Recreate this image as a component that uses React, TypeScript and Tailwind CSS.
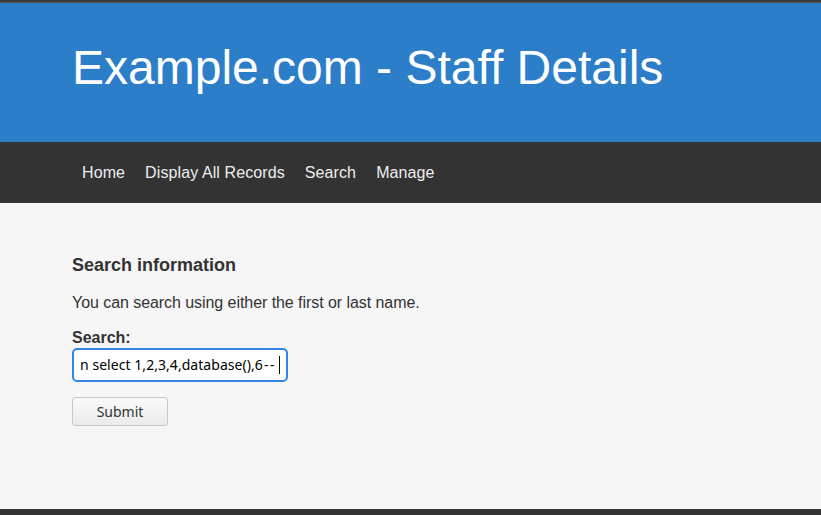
export default function App() {
  return (
    <div className="min-h-[515px] flex flex-col bg-[#f6f6f6] font-['Liberation_Sans',Arial,sans-serif] text-[#333]">
      {/* top strip */}
      <div className="h-[3px] bg-[#3b3b3b] border-b border-[#555]" />

      {/* header */}
      <header className="h-[139px] bg-[#2b7ec7] pt-[37px] px-[72px]">
        <h1 className="text-[48px] leading-[55px] text-white font-normal">Example.com - Staff Details</h1>
      </header>

      {/* nav */}
      <nav className="h-[61px] bg-[#333333] flex items-center px-[72px]">
        {['Home', 'Display All Records', 'Search', 'Manage'].map(item => (
          <a key={item} href="#" className="px-[10px] text-[16px] leading-[20px] tracking-[0.1px] text-[#eeeeee]">
            {item}
          </a>
        ))}
      </nav>

      {/* content */}
      <main className="h-[306px] px-[72px] pt-[50px]">
        <h2 className="text-[18px] leading-[24px] font-bold">Search information</h2>
        <p className="mt-[15.5px] text-[16px] leading-[20px] tracking-[-0.06px]">You can search using either the first or last name.</p>

        <form className="mt-[15px]">
          <label className="block text-[16px] leading-[20px] font-bold">Search:</label>
          <div className="w-[216px] h-[34px] flex items-center overflow-hidden whitespace-nowrap bg-white border-2 border-[#3584e4] rounded-[5px] pl-[6px] font-['Noto_Sans',sans-serif] text-[14px] tracking-[0.05px] text-black">
            n select 1,2,3,4,database(),6<span className="tracking-[1.5px] ml-[1px]">--</span>
            <span className="ml-[3px] inline-block w-px h-[18px] bg-black" />
          </div>
          <button
            type="button"
            className="mt-[15px] w-[96px] h-[29px] rounded-[3px] border border-[#c8c8c8] bg-gradient-to-b from-[#fafafa] to-[#ebebeb] font-['Noto_Sans',sans-serif] text-[14px] text-[#2e3436]"
          >
            Submit
          </button>
        </form>
      </main>

      {/* footer */}
      <footer className="flex-1 bg-[#333333]" />
    </div>
  )
}
